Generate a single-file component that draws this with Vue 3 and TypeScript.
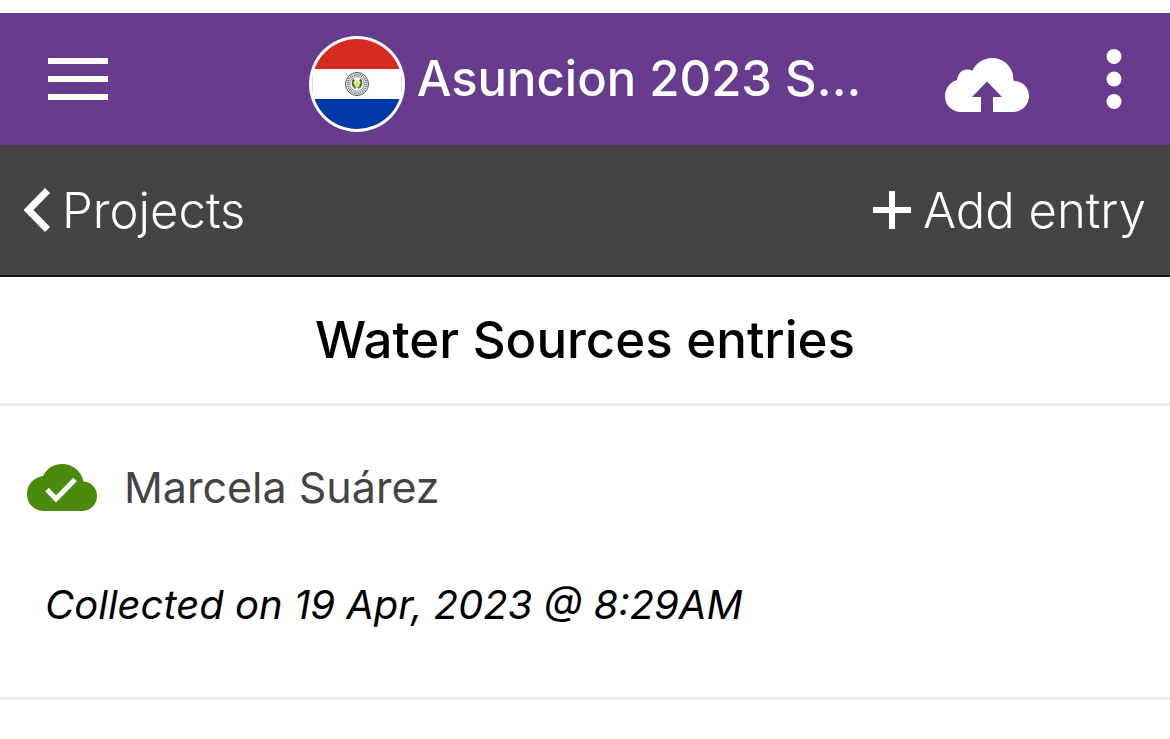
<script setup lang="ts">
interface Entry {
  id: number
  title: string
  collected: string
}

const project = 'Asuncion 2023 S...'
const form = 'Water Sources'
const entries: Entry[] = [
  { id: 1, title: 'Marcela Suárez', collected: '19 Apr, 2023 @ 8:29AM' },
]
</script>

<template>
  <div class="app">
    <header class="top">
      <button class="icon-button" type="button" aria-label="Menu">
        <svg width="60" height="44" viewBox="0 0 60 44" fill="#fff">
          <rect y="1" width="60" height="6" />
          <rect y="19" width="60" height="6" />
          <rect y="37" width="60" height="6" />
        </svg>
      </button>
      <div class="brand">
        <svg class="flag" width="96" height="96" viewBox="0 0 96 96" aria-hidden="true">
          <defs>
            <clipPath id="disc"><circle cx="48" cy="48" r="45" /></clipPath>
          </defs>
          <circle cx="48" cy="48" r="48" fill="#fff" />
          <g clip-path="url(#disc)">
            <rect width="96" height="33" fill="#d52b1e" />
            <rect y="63" width="96" height="33" fill="#0038a8" />
          </g>
          <path d="M3.500 40v16M92.500 40v16" stroke="#dcdce0" stroke-width="1" />
          <circle cx="48" cy="48" r="11.500" fill="#fff" stroke="#4b4f50" stroke-width="1" />
          <circle cx="48" cy="48" r="9.300" fill="none" stroke="#777c7c" stroke-width="2.200" stroke-dasharray="1.300 .7" />
          <circle cx="48" cy="48" r="7.300" fill="#fff" stroke="#6d7272" stroke-width=".8" />
          <path d="M45 43.500q-3.500 4.500 2 8.500M51 43.500q3.500 4.500-2 8.500" fill="none" stroke="#2f7141" stroke-width="2.200" />
          <path d="M48 43.500l1.200 3 3 .3-2.300 1.900.8 3-2.700-1.700-2.700 1.700.8-3-2.300-1.900 3-.3z" fill="#f0dc50" />
        </svg>
        <h1>{{ project }}</h1>
      </div>
      <div class="actions">
        <button class="icon-button" type="button" aria-label="Upload entries">
          <svg class="upload" width="84" height="54" viewBox="0 0 84 54" fill="#fff">
            <path d="M36 54H16C7 54 0 47 0 38.500 0 30.500 5 24 12 22 13 15.500 17 11.500 22 11.500c2 0 3.800.4 5.300 1.200C31 5 38.500 0 47 0c12 0 21.500 9.500 21.500 21.500v1.200C77.500 22.700 84 29.500 84 38c0 9-7 16-16 16H48V39h9L42 23.500 27 39h9z" />
          </svg>
        </button>
        <button class="icon-button" type="button" aria-label="More options">
          <svg width="16" height="60" viewBox="0 0 16 60" fill="#fff">
            <circle cx="8" cy="7.500" r="7.500" />
            <circle cx="8" cy="30" r="7.500" />
            <circle cx="8" cy="52.500" r="7.500" />
          </svg>
        </button>
      </div>
    </header>

    <nav class="bar">
      <a href="#projects">
        <svg width="26" height="46" viewBox="0 0 26 46" aria-hidden="true">
          <path d="M23.500 2.500L4.500 22l19 19.500" fill="none" stroke="#fff" stroke-width="7" />
        </svg>
        Projects
      </a>
      <button class="add" type="button">
        <svg width="38" height="40" viewBox="0 0 38 40" fill="#fff" aria-hidden="true">
          <rect y="16" width="38" height="6" />
          <rect x="16" width="6" height="38" />
        </svg>
        Add entry
      </button>
    </nav>

    <main>
      <h2>{{ form }} entries</h2>
      <ul>
        <li v-for="entry in entries" :key="entry.id">
          <div class="name">
            <svg width="70" height="48" viewBox="0 0 70 48" role="img" aria-label="Uploaded">
              <path d="M17 48C7 48 0 40.500 0 31c0-9.500 7-17 16-18C20 5 27 1 35 1c11 0 19.500 7.500 21.500 17.500C64.500 19 70 25 70 33c0 8.500-6.500 15-15 15z" fill="#4a8b0e" />
              <path d="M20 26.500l9 9.500 19-19.500" fill="none" stroke="#fff" stroke-width="5" />
            </svg>
            <h3>{{ entry.title }}</h3>
          </div>
          <p>Collected on {{ entry.collected }}</p>
        </li>
      </ul>
    </main>
  </div>
</template>

<style>
body {
  margin: 0;
  background: #fff;
}
</style>

<style scoped>
.app {
  padding-top: 13px;
  font-family: Inter, "Liberation Sans", sans-serif;
  color: #000;
}
svg {
  display: block;
  flex: none;
}
button {
  padding: 0;
  border: 0;
  background: none;
  color: inherit;
  font: inherit;
  cursor: pointer;
}
h1,
h2,
h3,
p,
ul {
  margin: 0;
  padding: 0;
}
.top {
  display: grid;
  grid-template-columns: 1fr auto 1fr;
  align-items: center;
  height: 132px;
  padding: 0 48px;
  box-sizing: border-box;
  background: #673b8e;
  color: #fff;
}
.top > .icon-button {
  justify-self: start;
}
.brand {
  display: flex;
  align-items: center;
  gap: 12px;
}
.flag {
  margin-top: 10px;
}
h1 {
  font-size: 49px;
  line-height: 60px;
  font-weight: 500;
  white-space: nowrap;
}
.actions {
  display: flex;
  align-items: center;
  justify-self: end;
  gap: 77px;
}
.upload {
  margin-top: 12px;
}
.bar {
  display: flex;
  align-items: center;
  justify-content: space-between;
  height: 132px;
  padding: 2px 24px 0;
  box-sizing: border-box;
  border-bottom: 2px solid #111;
  background: #444;
  color: #fff;
  font-size: 49px;
  line-height: 60px;
  font-weight: 300;
}
.bar a,
.add {
  display: flex;
  align-items: center;
  gap: 12px;
  color: inherit;
  text-decoration: none;
}
h2 {
  padding: 31px 24px;
  border-bottom: 3px solid #ececec;
  font-size: 51px;
  line-height: 64px;
  font-weight: 500;
  text-align: center;
}
ul {
  list-style: none;
}
li {
  padding: 53px 27px 64px;
  border-bottom: 3px solid #ececec;
}
.name {
  display: flex;
  align-items: center;
  gap: 27px;
  color: #444;
}
h3 {
  font-size: 43px;
  line-height: 56px;
  font-weight: 400;
}
p {
  padding: 62px 18px 0;
  font-size: 40px;
  line-height: 56px;
  font-style: italic;
}
</style>
